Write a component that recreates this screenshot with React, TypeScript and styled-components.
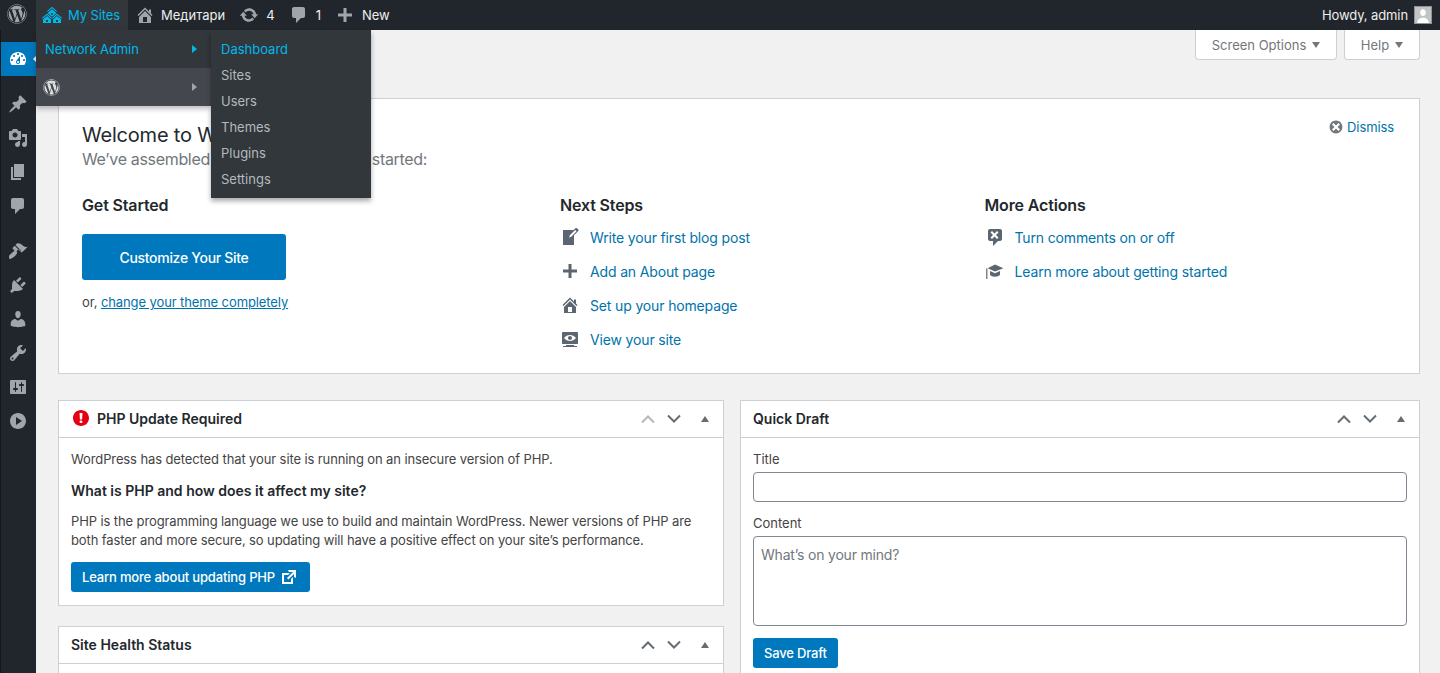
import styled, { createGlobalStyle } from 'styled-components';
import { FaWordpress } from 'react-icons/fa';

const paths = {
  dashboard:
    'M3.76 16h12.48c1.1-1.37 1.76-3.11 1.76-5 0-4.42-3.58-8-8-8s-8 3.58-8 8c0 1.89.66 3.63 1.76 5zM10 4c.55 0 1 .45 1 1s-.45 1-1 1-1-.45-1-1 .45-1 1-1zM6 6c.55 0 1 .45 1 1s-.45 1-1 1-1-.45-1-1 .45-1 1-1zm8 0c.55 0 1 .45 1 1s-.45 1-1 1-1-.45-1-1 .45-1 1-1zm-5.37 5.55L12 7v6c0 1.1-.9 2-2 2s-2-.9-2-2c0-.57.24-1.08.63-1.45zM4 10c.55 0 1 .45 1 1s-.45 1-1 1-1-.45-1-1 .45-1 1-1zm12 0c.55 0 1 .45 1 1s-.45 1-1 1-1-.45-1-1 .45-1 1-1zm-5 3c0-.55-.45-1-1-1s-1 .45-1 1 .45 1 1 1 1-.45 1-1z',
  post: 'M10.44 3.02l1.82-1.82 6.36 6.35-1.83 1.82c-1.05-.68-2.48-.57-3.41.36l-.75.75c-.92.93-1.04 2.35-.35 3.41l-1.83 1.82-2.41-2.41-2.8 2.79c-.42.42-3.38 2.71-3.8 2.29s1.86-3.39 2.28-3.81l2.79-2.79L4.1 9.36l1.83-1.82c1.05.69 2.48.57 3.4-.36l.75-.75c.93-.92 1.05-2.35.36-3.41z',
  media:
    'M13 11V4c0-.55-.45-1-1-1h-1.67L9 1H5L3.67 3H2c-.55 0-1 .45-1 1v7c0 .55.45 1 1 1h10c.55 0 1-.45 1-1zM7 4.5c1.38 0 2.5 1.12 2.5 2.5S8.38 9.5 7 9.5 4.5 8.38 4.5 7 5.62 4.5 7 4.5zM14 6h5v10.5c0 1.38-1.12 2.5-2.5 2.5S14 17.88 14 16.5s1.12-2.5 2.5-2.5c.17 0 .34.02.5.05V9h-3V6zm-4 8.05V13h2v3.5c0 1.38-1.12 2.5-2.5 2.5S7 17.88 7 16.5 8.12 14 9.5 14c.17 0 .34.02.5.05z',
  page: 'M6 15V2h10v13H6zm-1 1h8v2H3V5h2v11z',
  comments:
    'M5 2h9c1.1 0 2 .9 2 2v7c0 1.1-.9 2-2 2h-2l-5 5v-5H5c-1.1 0-2-.9-2-2V4c0-1.1.9-2 2-2z',
  appearance:
    'M14.48 11.06L7.41 3.99l1.5-1.5c.5-.56 2.3-.47 3.51.32 1.21.8 1.43 1.28 2.91 2.1 1.18.64 2.45 1.26 4.45.85zm-.71.71L6.7 4.7 4.93 6.47c-.39.39-.39 1.02 0 1.41l1.06 1.06c.39.39.39 1.03 0 1.42-.6.6-1.43 1.11-2.21 1.69-.35.26-.7.53-1.01.84C1.43 13.23.28 16.6 1.5 17.82c.46.46 1.29.18 2.32-.47 1.03-.65 2.32-1.56 3.43-2.68.81-.81 1.4-1.62 1.74-2.33.27-.58.27-1.03 0-1.3-.39-.39-.39-1.02 0-1.41l1.06-1.06c.4-.4 1.03-.4 1.42 0l1.06 1.06c.39.39 1.02.39 1.41 0z',
  plugins:
    'M13.11 4.36L9.87 7.6 8 5.73l3.24-3.24c.35-.34 1.05-.2 1.56.32.52.51.66 1.21.31 1.55zm-8 1.77l.91-1.12 9.01 9.01-1.19.84c-.71.71-2.63 1.16-3.82 1.16H6.14L4.9 17.26c-.59.59-1.54.59-2.12 0-.59-.58-.59-1.53 0-2.12l1.24-1.24v-3.88c0-1.13.4-3.19 1.09-3.89zm7.26 3.97l3.24-3.24c.34-.35 1.04-.21 1.55.31.52.51.66 1.21.31 1.55l-3.24 3.25z',
  users:
    'M10 9.25c-2.27 0-2.73-3.44-2.73-3.44C7 4.02 7.82 2 9.97 2c2.16 0 2.98 2.02 2.71 3.81 0 0-.41 3.44-2.68 3.44zm0 2.57L12.72 10c2.39 0 4.52 2.33 4.52 4.53v2.49s-3.65 1.13-7.24 1.13c-3.65 0-7.24-1.13-7.24-1.13v-2.49c0-2.25 1.94-4.48 4.47-4.48z',
  tools:
    'M16.68 9.77c-1.34 1.34-3.3 1.67-4.95.99l-5.41 6.52c-.99.99-2.59.99-3.58 0s-.99-2.59 0-3.57l6.52-5.42c-.68-1.65-.35-3.61.99-4.95 1.28-1.28 3.12-1.62 4.72-1.06l-2.89 2.89 2.82 2.82 2.86-2.87c.53 1.58.18 3.39-1.08 4.67zM3.81 16.21c.4.39 1.04.39 1.43 0 .4-.4.4-1.04 0-1.43-.39-.4-1.03-.4-1.43 0-.39.39-.39 1.03 0 1.43z',
  settings:
    'M18 16V4c0-.55-.45-1-1-1H3c-.55 0-1 .45-1 1v12c0 .55.45 1 1 1h14c.55 0 1-.45 1-1zM8 11h1c.55 0 1 .45 1 1s-.45 1-1 1H8v1.5c0 .28-.22.5-.5.5s-.5-.22-.5-.5V13H6c-.55 0-1-.45-1-1s.45-1 1-1h1V5.5c0-.28.22-.5.5-.5s.5.22.5.5V11zm5-2h-1c-.55 0-1-.45-1-1s.45-1 1-1h1V5.5c0-.28.22-.5.5-.5s.5.22.5.5V7h1c.55 0 1 .45 1 1s-.45 1-1 1h-1v5.5c0 .28-.22.5-.5.5s-.5-.22-.5-.5V9z',
  play: 'M10 2c4.42 0 8 3.58 8 8s-3.58 8-8 8-8-3.58-8-8 3.58-8 8-8zm-2 12l6-4-6-4v8z',
  home: 'M16 8.5l1.53 1.53-1.06 1.06L10 4.62l-6.47 6.47-1.06-1.06L10 2.5l4 4v-2h2v4zm-6-2.46l6 5.99V18H4v-5.97zM12 17v-5H8v5h4z',
  multisite:
    'M14.27 6.87L10 3.14 5.73 6.87 5 6.14l5-4.38 5 4.38zM14 8.42l-4.05 3.43L6 8.38v-.74l4-3.5 4 3.5v.78zM11 9.7V8H9v1.7h2zm-1.73 4.03L5 10 .73 13.73 0 13l5-4.38L10 13zm10 0L15 10l-4.27 3.73L10 13l5-4.38L20 13zM5 11l4 3.5V18H1v-3.5zm10 0l4 3.5V18h-8v-3.5zM6 17v-2H4v2h2zm10 0v-2h-2v2h2z',
  update:
    'M10.2 3.28c3.53 0 6.43 2.61 6.92 6h2.08l-3.5 4-3.5-4h2.32c-.45-1.97-2.21-3.45-4.32-3.45-1.45 0-2.73.71-3.54 1.78L4.95 5.66C6.23 4.2 8.11 3.28 10.2 3.28zm-.4 13.44c-3.52 0-6.43-2.61-6.92-6H.8l3.5-4c1.17 1.33 2.33 2.67 3.5 4H5.48c.45 1.97 2.21 3.45 4.32 3.45 1.45 0 2.73-.71 3.54-1.78l1.71 1.95c-1.28 1.46-3.15 2.38-5.25 2.38z',
  plus: 'M17 8.5v3h-5.5V17h-3v-5.5H3v-3h5.5V3h3v5.5H17z',
  write:
    'M16.89 1.2l1.41 1.41c.39.39.39 1.02 0 1.41L14 8.33V18H3V3h10.67l1.81-1.8c.39-.39 1.02-.39 1.41 0zm-5.66 8.48l5.37-5.36-1.42-1.42-5.36 5.37-.71 2.12z',
  view: 'M18 14V4c0-.55-.45-1-1-1H3c-.55 0-1 .45-1 1v10c0 .55.45 1 1 1h14c.55 0 1-.45 1-1zm-8-8c2.3 0 4.4 1.14 6 3-1.6 1.86-3.7 3-6 3s-4.4-1.14-6-3c1.6-1.86 3.7-3 6-3zm2 3c0-1.1-.9-2-2-2s-2 .9-2 2 .9 2 2 2 2-.9 2-2zm2 8h3v1H3v-1h3v-1h8v1z',
  noComments:
    'M5 2h10c1.1 0 2 .9 2 2v8c0 1.1-.9 2-2 2h-2l-5 5v-5H5c-1.1 0-2-.9-2-2V4c0-1.1.9-2 2-2zm8.5 8.5L11 8l2.5-2.5L12 4 9.5 6.5 7 4 5.5 5.5 8 8l-2.5 2.5L7 12l2.5-2.5L12 12z',
  learn:
    'M10 10.4L2.6 7.3 10 3.6l8.4 3.7zM5 10l5 2.2 5-2.2v3.6c0 1-2.2 2.2-5 2.2s-5-1.2-5-2.2zM1.2 7.2l1.2.6V18H1.2z',
  external:
    'M9 3h8v8l-2-1V6.92l-5.6 5.59-1.41-1.41L14.08 5H10zm3 12v-3l2-2v7H3V6h8L9 8H5v7h7z',
  dismiss:
    'M10 2c4.42 0 8 3.58 8 8s-3.58 8-8 8-8-3.58-8-8 3.58-8 8-8zm5 11l-3-3 3-3-2-2-3 3-3-3-2 2 3 3-3 3 2 2 3-3 3 3z',
  warning:
    'M10 2c4.42 0 8 3.58 8 8s-3.58 8-8 8-8-3.58-8-8 3.58-8 8-8zm1.13 9.38l.35-6.46H8.52l.35 6.46h2.26zm-.09 3.36c.24-.23.37-.55.37-.96 0-.42-.12-.74-.36-.97s-.59-.35-1.06-.35-.82.12-1.07.35-.37.55-.37.97c0 .41.13.73.38.96.26.23.61.34 1.06.34s.8-.11 1.05-.34z',
};

type IconName = keyof typeof paths;

const GlobalStyle = createGlobalStyle`
  html, body {
    margin: 0;
    height: 100%;
    overflow: hidden;
    background: #f1f1f1;
  }
  body {
    font-family: Inter, "Liberation Sans", sans-serif;
    font-size: 13px;
    color: #444;
  }
  * {
    box-sizing: border-box;
  }
`;

const IconSvg = styled.svg<{ $size: number; $color: string }>`
  width: ${(p) => p.$size}px;
  height: ${(p) => p.$size}px;
  fill: ${(p) => p.$color};
  flex-shrink: 0;
  display: block;
`;

const Icon = ({
  name,
  size = 20,
  color = '#a0a5aa',
}: {
  name: IconName;
  size?: number;
  color?: string;
}) => (
  <IconSvg viewBox="0 0 20 20" $size={size} $color={color}>
    <path d={paths[name]} />
  </IconSvg>
);

const Page = styled.div`
  position: relative;
  height: 673px;
  overflow: hidden;
`;

const AdminBar = styled.div`
  height: 30px;
  background: #21262c;
  display: flex;
  align-items: stretch;
  color: #eee;
  font-size: 13px;
`;

const LogoItem = styled.div`
  width: 36px;
  display: flex;
  align-items: center;
  justify-content: center;
  padding: 0 2px 2px 0;
  color: #a0a5aa;
  font-size: 20px;
`;

const BarItem = styled.div<{ $active?: boolean; $gap?: number }>`
  display: flex;
  align-items: center;
  gap: ${(p) => p.$gap ?? 6}px;
  padding: ${(p) => (p.$active ? '0 8px 0 6px' : '0 7px')};
  background: ${(p) => (p.$active ? '#32373c' : 'transparent')};
  color: ${(p) => (p.$active ? '#00b9eb' : '#eee')};
  letter-spacing: ${(p) => (p.$active ? '-0.1px' : '0')};
  white-space: nowrap;
`;

const BarSpacer = styled.div`
  flex: 1;
`;

const Howdy = styled.div`
  display: flex;
  align-items: center;
  gap: 6px;
  padding-right: 8px;
  letter-spacing: -0.1px;
`;

const Avatar = styled.div`
  width: 18px;
  height: 18px;
  background: #c2c4c6;
  border: 1px solid #8f9397;
  overflow: hidden;
`;

const Workspace = styled.div`
  display: flex;
  height: 643px;
`;

const Sidebar = styled.nav`
  width: 36px;
  flex-shrink: 0;
  background: #21262c;
  border-left: 1px solid #14171a;
  padding-top: 12px;
`;

const SideItem = styled.div<{ $active?: boolean; $gapAbove?: number }>`
  position: relative;
  height: 34px;
  margin-top: ${(p) => p.$gapAbove ?? 0}px;
  padding-right: 2px;
  display: flex;
  align-items: center;
  justify-content: center;
  background: ${(p) => (p.$active ? '#0078bd' : 'transparent')};

  ${(p) =>
    p.$active &&
    `&::after {
      content: '';
      position: absolute;
      right: 0;
      top: 50%;
      margin-top: -3px;
      border: 3px solid transparent;
      border-right-color: #f1f1f1;
    }`}
`;

const Main = styled.main`
  flex: 1;
  min-width: 0;
  padding: 0 20px 0 22px;
`;

const ScreenMeta = styled.div`
  display: flex;
  justify-content: flex-end;
  gap: 7px;
  height: 68px;
`;

const ScreenTab = styled.div<{ $width: number }>`
  width: ${(p) => p.$width}px;
  height: 30px;
  background: #fff;
  border: 1px solid #ccd0d4;
  border-top: none;
  border-radius: 0 0 4px 4px;
  display: flex;
  align-items: center;
  justify-content: center;
  gap: 6px;
  color: #72777c;
`;

const Caret = styled.span<{ $color?: string; $dir?: 'up' | 'down' }>`
  display: inline-block;
  width: 0;
  height: 0;
  border-left: 4px solid transparent;
  border-right: 4px solid transparent;
  ${(p) =>
    p.$dir === 'up'
      ? `border-bottom: 6px solid ${p.$color ?? '#72777c'};`
      : `border-top: 6px solid ${p.$color ?? '#72777c'};`}
`;

const WelcomePanel = styled.section`
  background: #fff;
  border: 1px solid #ccd0d4;
  height: 276px;
  padding: 23px 25px 0 23px;
  margin-bottom: 26px;
`;

const WelcomeHead = styled.div`
  display: flex;
  justify-content: space-between;
  align-items: flex-start;
`;

const WelcomeTitle = styled.h2`
  margin: 0;
  font-size: 20px;
  font-weight: 400;
  line-height: 27px;
  letter-spacing: -0.2px;
  color: #23282d;
`;

const WelcomeSub = styled.p`
  margin: 0;
  font-size: 16px;
  line-height: 21px;
  letter-spacing: -0.33px;
  color: #72777c;
`;

const Dismiss = styled.a`
  display: flex;
  align-items: center;
  gap: 3px;
  font-size: 13px;
  line-height: 16px;
  letter-spacing: -0.1px;
  color: #0073aa;
  margin-top: -3px;
`;

const WelcomeColumns = styled.div`
  display: grid;
  grid-template-columns: 478px 424.5px 1fr;
  margin-top: 24px;
`;

const ColumnTitle = styled.h3`
  margin: 0 0 4px;
  font-size: 16px;
  font-weight: 600;
  line-height: 22px;
  letter-spacing: -0.15px;
  color: #23282d;
`;

const HeroButton = styled.a`
  display: flex;
  align-items: center;
  justify-content: center;
  width: 204px;
  height: 46px;
  margin-top: 18px;
  background: #0078bd;
  border-radius: 3px;
  color: #fff;
  font-size: 14px;
  font-weight: 500;
  letter-spacing: -0.3px;
`;

const OrLine = styled.p`
  margin: 13px 0 0;
  font-size: 13px;
  line-height: 18px;
  letter-spacing: -0.1px;

  a {
    color: #0073aa;
    text-decoration: underline;
  }
`;

const StepList = styled.ul`
  list-style: none;
  margin: 0;
  padding: 0;
`;

const StepRow = styled.li`
  display: flex;
  align-items: center;
  gap: 10px;
  height: 34px;
  font-size: 14px;
  letter-spacing: -0.15px;
  color: #0073aa;
`;

const PostboxGrid = styled.div`
  display: grid;
  grid-template-columns: 666px 680px;
  gap: 16px;
`;

const Column = styled.div`
  display: flex;
  flex-direction: column;
  gap: 20px;
`;

const Postbox = styled.section`
  background: #fff;
  border: 1px solid #ccd0d4;
`;

const BoxHeader = styled.header`
  height: 37px;
  border-bottom: 1px solid #ccd0d4;
  display: flex;
  align-items: center;
  padding: 0 14px 0 12px;
`;

const BoxTitle = styled.h2`
  flex: 1;
  margin: 0;
  padding-bottom: 2px;
  display: flex;
  align-items: center;
  gap: 6px;
  font-size: 14px;
  font-weight: 600;
  color: #23282d;
`;

const Handles = styled.div`
  display: flex;
  align-items: center;
`;

const Chevron = styled.svg<{ $muted?: boolean }>`
  width: 16px;
  height: 10px;
  margin-right: 10px;
  fill: none;
  stroke: ${(p) => (p.$muted ? '#b4b9be' : '#646c74')};
  stroke-width: 2;
`;

const HandleCaret = styled.div`
  margin-left: 9px;
  padding-bottom: 5px;
`;

const BoxBody = styled.div`
  padding: 12px 12px 13px;
`;

const HealthBody = styled.div`
  height: 120px;
`;

const Text = styled.p`
  margin: 0 0 12px;
  font-size: 13px;
  line-height: 19px;
  letter-spacing: -0.11px;
`;

const BoxSubtitle = styled.h3`
  margin: 0 0 12px;
  font-size: 14px;
  font-weight: 600;
  line-height: 19px;
  color: #23282d;
`;

const SmallButton = styled.a`
  display: inline-flex;
  align-items: center;
  gap: 4px;
  height: 30px;
  padding: 0 11px;
  background: #0078bd;
  border-radius: 3px;
  color: #fff;
  font-size: 13px;
  font-weight: 500;
  letter-spacing: -0.17px;
`;

const Label = styled.label`
  display: block;
  font-size: 13px;
  line-height: 19px;
  margin-bottom: 3px;
`;

const TitleInput = styled.input`
  display: block;
  width: 100%;
  height: 30px;
  margin-bottom: 12px;
  border: 1px solid #7e8993;
  border-radius: 4px;
  background: #fff;
`;

const ContentInput = styled.textarea`
  display: block;
  width: 100%;
  height: 90px;
  margin-bottom: 12px;
  padding: 8px 7px;
  border: 1px solid #7e8993;
  border-radius: 4px;
  resize: none;
  font: 14px/19px Inter, 'Liberation Sans', sans-serif;
  letter-spacing: -0.2px;

  &::placeholder {
    color: #72777c;
  }
`;

const FlyoutMenu = styled.div`
  position: absolute;
  top: 30px;
  left: 36px;
  display: flex;
  align-items: flex-start;
  z-index: 10;
`;

const FlyoutMain = styled.div`
  width: 175px;
  background: #32373c;
  box-shadow: 0 3px 5px rgba(0, 0, 0, 0.25);
`;

const FlyoutRow = styled.div<{ $hover?: boolean }>`
  height: 38px;
  display: flex;
  align-items: center;
  justify-content: space-between;
  padding: 0 14px 0 9px;
  font-size: 13px;
  letter-spacing: -0.1px;
  color: #00b9eb;
  background: ${(p) => (p.$hover ? '#44484e' : 'transparent')};
`;

const FlyoutLogo = styled(FaWordpress)`
  margin-left: -2px;
  color: #dcdee0;
  font-size: 17px;
`;

const FlyoutArrow = styled.span<{ $color: string }>`
  width: 0;
  height: 0;
  border-top: 4px solid transparent;
  border-bottom: 4px solid transparent;
  border-left: 5px solid ${(p) => p.$color};
`;

const SubMenu = styled.ul`
  list-style: none;
  margin: 0;
  padding: 6px 0;
  width: 160px;
  background: #32373c;
  box-shadow: 0 3px 5px rgba(0, 0, 0, 0.35);
`;

const SubItem = styled.li<{ $current?: boolean }>`
  height: 26px;
  display: flex;
  align-items: center;
  padding-left: 10px;
  font-size: 13px;
  color: ${(p) => (p.$current ? '#00b9eb' : '#b4b9be')};
`;

const sideItems: { name: IconName; gapAbove?: number }[] = [
  { name: 'post', gapAbove: 11 },
  { name: 'media' },
  { name: 'page' },
  { name: 'comments' },
  { name: 'appearance', gapAbove: 11 },
  { name: 'plugins' },
  { name: 'users' },
  { name: 'tools' },
  { name: 'settings' },
  { name: 'play' },
];

const nextSteps: { icon: IconName; label: string }[] = [
  { icon: 'write', label: 'Write your first blog post' },
  { icon: 'plus', label: 'Add an About page' },
  { icon: 'home', label: 'Set up your homepage' },
  { icon: 'view', label: 'View your site' },
];

const moreActions: { icon: IconName; label: string }[] = [
  { icon: 'noComments', label: 'Turn comments on or off' },
  { icon: 'learn', label: 'Learn more about getting started' },
];

const subItems = ['Dashboard', 'Sites', 'Users', 'Themes', 'Plugins', 'Settings'];

const BoxHandles = ({ upMuted }: { upMuted?: boolean }) => (
  <Handles>
    <Chevron viewBox="0 0 16 10" $muted={upMuted}>
      <path d="M2 8.5 8 2.5l6 6" />
    </Chevron>
    <Chevron viewBox="0 0 16 10">
      <path d="M2 1.5l6 6 6-6" />
    </Chevron>
    <HandleCaret>
      <Caret $dir="up" $color="#646c74" />
    </HandleCaret>
  </Handles>
);

const App = () => {
  return (
    <Page>
      <GlobalStyle />
      <AdminBar>
        <LogoItem>
          <FaWordpress />
        </LogoItem>
        <BarItem $active>
          <Icon name="multisite" color="#00b9eb" />
          My Sites
        </BarItem>
        <BarItem>
          <Icon name="home" />
          Медитари
        </BarItem>
        <BarItem $gap={7}>
          <Icon name="update" />4
        </BarItem>
        <BarItem $gap={7}>
          <Icon name="comments" />1
        </BarItem>
        <BarItem $gap={7}>
          <Icon name="plus" />
          New
        </BarItem>
        <BarSpacer />
        <Howdy>
          Howdy, admin
          <Avatar>
            <svg viewBox="0 0 18 18" width="16" height="16">
              <path
                fill="#fff"
                d="M9 2.5c2 0 3.2 1.5 3.2 3.6 0 2.2-1.3 4-3.2 4S5.8 8.3 5.8 6.1C5.8 4 7 2.5 9 2.5zM2.5 18c0-3.5 2.5-6 6.500-6s6.500 2.500 6.500 6z"
              />
            </svg>
          </Avatar>
        </Howdy>
      </AdminBar>

      <Workspace>
        <Sidebar>
          <SideItem $active>
            <Icon name="dashboard" color="#fff" />
          </SideItem>
          {sideItems.map((item) => (
            <SideItem key={item.name} $gapAbove={item.gapAbove}>
              <Icon name={item.name} />
            </SideItem>
          ))}
        </Sidebar>

        <Main>
          <ScreenMeta>
            <ScreenTab $width={142}>
              Screen Options <Caret />
            </ScreenTab>
            <ScreenTab $width={76}>
              Help <Caret />
            </ScreenTab>
          </ScreenMeta>

          <WelcomePanel>
            <WelcomeHead>
              <div>
                <WelcomeTitle>Welcome to WordPress!</WelcomeTitle>
                <WelcomeSub>We’ve assembled some links to get you started:</WelcomeSub>
              </div>
              <Dismiss>
                <Icon name="dismiss" size={16} color="#72777c" />
                Dismiss
              </Dismiss>
            </WelcomeHead>
            <WelcomeColumns>
              <div>
                <ColumnTitle>Get Started</ColumnTitle>
                <HeroButton>Customize Your Site</HeroButton>
                <OrLine>
                  or, <a>change your theme completely</a>
                </OrLine>
              </div>
              <div>
                <ColumnTitle>Next Steps</ColumnTitle>
                <StepList>
                  {nextSteps.map((step) => (
                    <StepRow key={step.label}>
                      <Icon name={step.icon} color="#5b6670" />
                      {step.label}
                    </StepRow>
                  ))}
                </StepList>
              </div>
              <div>
                <ColumnTitle>More Actions</ColumnTitle>
                <StepList>
                  {moreActions.map((step) => (
                    <StepRow key={step.label}>
                      <Icon name={step.icon} color="#5b6670" />
                      {step.label}
                    </StepRow>
                  ))}
                </StepList>
              </div>
            </WelcomeColumns>
          </WelcomePanel>

          <PostboxGrid>
            <Column>
              <Postbox>
                <BoxHeader>
                  <BoxTitle>
                    <Icon name="warning" color="#e60012" />
                    PHP Update Required
                  </BoxTitle>
                  <BoxHandles upMuted />
                </BoxHeader>
                <BoxBody>
                  <Text>WordPress has detected that your site is running on an insecure version of PHP.</Text>
                  <BoxSubtitle>What is PHP and how does it affect my site?</BoxSubtitle>
                  <Text>
                    PHP is the programming language we use to build and maintain WordPress. Newer versions of PHP are
                    both faster and more secure, so updating will have a positive effect on your site’s performance.
                  </Text>
                  <SmallButton>
                    Learn more about updating PHP
                    <Icon name="external" color="#fff" />
                  </SmallButton>
                </BoxBody>
              </Postbox>
              <Postbox>
                <BoxHeader>
                  <BoxTitle>Site Health Status</BoxTitle>
                  <BoxHandles />
                </BoxHeader>
                <HealthBody />
              </Postbox>
            </Column>
            <Column>
              <Postbox>
                <BoxHeader>
                  <BoxTitle>Quick Draft</BoxTitle>
                  <BoxHandles />
                </BoxHeader>
                <BoxBody>
                  <Label>Title</Label>
                  <TitleInput />
                  <Label>Content</Label>
                  <ContentInput placeholder="What’s on your mind?" />
                  <SmallButton>Save Draft</SmallButton>
                </BoxBody>
              </Postbox>
            </Column>
          </PostboxGrid>
        </Main>
      </Workspace>

      <FlyoutMenu>
        <FlyoutMain>
          <FlyoutRow>
            Network Admin
            <FlyoutArrow $color="#00b9eb" />
          </FlyoutRow>
          <FlyoutRow $hover>
            <FlyoutLogo />
            <FlyoutArrow $color="#a0a5aa" />
          </FlyoutRow>
        </FlyoutMain>
        <SubMenu>
          {subItems.map((label, i) => (
            <SubItem key={label} $current={i === 0}>
              {label}
            </SubItem>
          ))}
        </SubMenu>
      </FlyoutMenu>
    </Page>
  );
};

export default App;
